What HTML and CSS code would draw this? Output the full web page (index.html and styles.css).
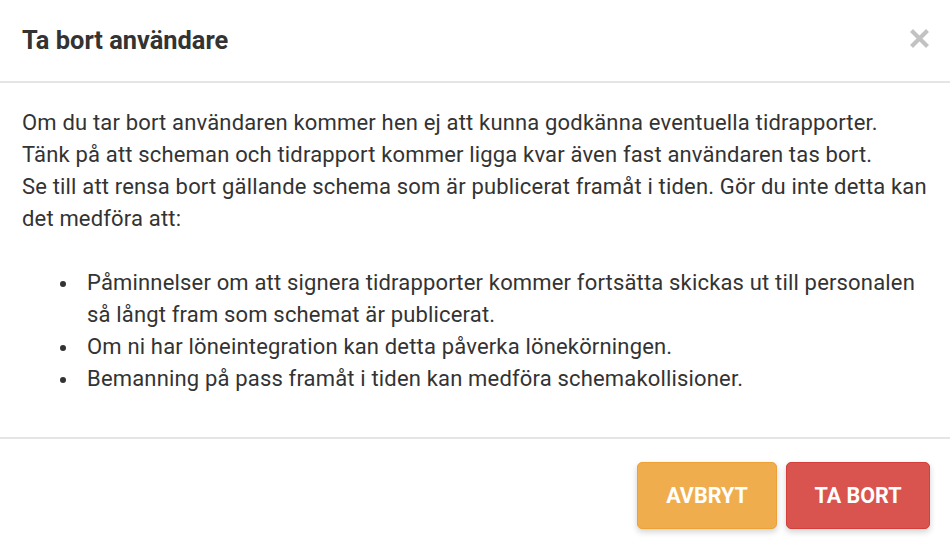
FILE: index.html
```html
<!DOCTYPE html>
<html lang="sv">
<head>
<meta charset="utf-8">
<link rel="stylesheet" href="styles.css">
</head>
<body>
<div class="modal">
  <div class="modal-header">
    <h2 class="modal-title">Ta bort användare</h2>
    <button class="close" aria-label="Stäng">
      <svg width="19" height="19" viewBox="0 0 19 19" aria-hidden="true"><path d="M3 3 L16 16 M16 3 L3 16" stroke="#c2c2c2" stroke-width="4.2" stroke-linecap="square" fill="none"/></svg>
    </button>
  </div>
  <div class="modal-body">
    <p class="intro">Om du tar bort användaren kommer hen ej att kunna godkänna eventuella tidrapporter.<br>Tänk på att scheman och tidrapport kommer ligga kvar även fast användaren tas bort.<br>Se till att rensa bort gällande schema som är publicerat framåt i tiden. Gör du inte detta kan det medföra att:</p>
    <ul class="list">
      <li>Påminnelser om att signera tidrapporter kommer fortsätta skickas ut till personalen så långt fram som schemat är publicerat.</li>
      <li>Om ni har löneintegration kan detta påverka lönekörningen.</li>
      <li>Bemanning på pass framåt i tiden kan medföra schemakollisioner.</li>
    </ul>
  </div>
  <div class="modal-footer">
    <button class="btn btn-warning">AVBRYT</button>
    <button class="btn btn-danger">TA BORT</button>
  </div>
</div>
</body>
</html>
```
FILE: styles.css
```css
html, body {
  margin: 0;
  padding: 0;
  background: #fff;
}
body {
  font-family: Roboto, "Liberation Sans", sans-serif;
  color: #333;
}
.modal {
  width: 950px;
  height: 548px;
  display: flex;
  flex-direction: column;
}
.modal-header {
  height: 81px;
  border-bottom: 2px solid #e5e5e5;
  display: flex;
  align-items: center;
  justify-content: space-between;
  padding: 0 21px 0 22px;
}
.modal-title {
  margin: 0;
  font-size: 25.4px;
  font-weight: 700;
  color: #333;
  line-height: 1;
}
.close {
  border: 0;
  background: none;
  padding: 0;
  display: flex;
  margin-bottom: 5px;
  cursor: pointer;
}
.modal-body {
  padding: 24px 22px 42px 22px;
  font-size: 22px;
  letter-spacing: 0.17px;
  line-height: 32px;
  border-bottom: 2px solid #e5e5e5;
}
.intro {
  margin: 0 0 32px 0;
}
.list {
  margin: 0;
  padding: 0 0 0 38px;
  list-style: none;
}
.list li {
  display: grid;
  grid-template-columns: 27px 1fr;
  align-items: start;
}
.list li::before {
  content: "";
  width: 6px;
  height: 6px;
  border-radius: 50%;
  background: #333;
  margin-top: 14px;
}
.modal-footer {
  flex: 1;
  display: flex;
  justify-content: flex-end;
  align-items: flex-start;
  gap: 9px;
  padding: 23px 20px 0 0;
}
.btn {
  font-family: Roboto, "Liberation Sans", sans-serif;
  font-size: 21.5px;
  font-weight: 700;
  color: #fff;
  height: 67px;
  border-radius: 5px;
  border: 1px solid;
  box-shadow: 0 3px 6px rgba(0,0,0,0.18);
  cursor: pointer;
}
.btn-warning {
  width: 140px;
  background: #f0ad4e;
  border-color: #eea236;
}
.btn-danger {
  width: 144px;
  background: #d9534f;
  border-color: #d43f3a;
}
```
